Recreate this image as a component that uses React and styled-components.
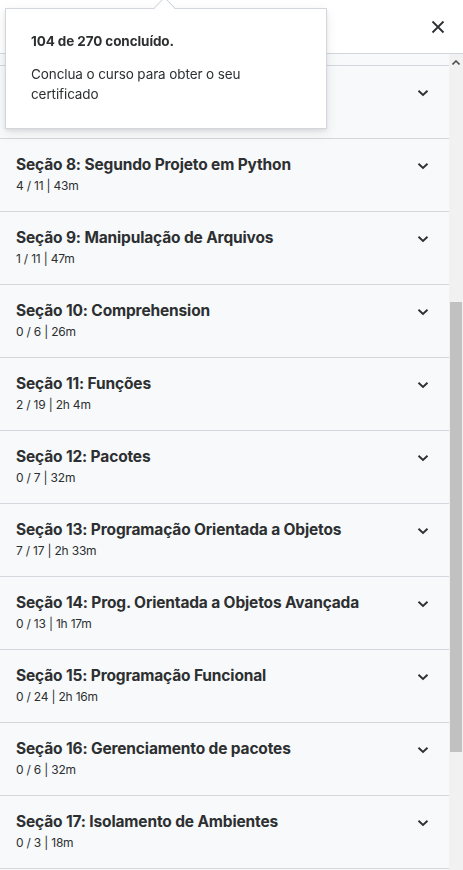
import React, { useLayoutEffect, useRef } from "react";
import styled, { createGlobalStyle } from "styled-components";

const Global = createGlobalStyle`
  html, body { margin: 0; padding: 0; background: #fff; }
  body { font-family: Inter, "Noto Sans", sans-serif; color: #2d2f31; }
  * { box-sizing: border-box; }
`;

const Page = styled.div`
  position: relative;
  width: 463px;
  height: 870px;
  display: flex;
  flex-direction: column;
  overflow: hidden;
`;

const Header = styled.header`
  height: 54px;
  flex: none;
  display: flex;
  align-items: center;
  justify-content: space-between;
  padding: 0 17px 0 16px;
  border-bottom: 1px solid #d1d7dc;
  background: #fff;
`;

const HeaderTitle = styled.h2`
  margin: 0;
  font-size: 16px;
  font-weight: 700;
`;

const CloseButton = styled.button`
  border: 0;
  background: none;
  padding: 0;
  width: 16px;
  height: 16px;
  display: flex;
  align-items: center;
  justify-content: center;
  color: #2d2f31;
`;

const Body = styled.div`
  flex: 1;
  display: flex;
  min-height: 0;
`;

const Viewport = styled.div`
  flex: 1;
  overflow-y: scroll;
  scrollbar-width: none;
  &::-webkit-scrollbar { display: none; }
  background: #f7f9fa;
`;

const Row = styled.div`
  height: 73px;
  display: flex;
  align-items: flex-start;
  justify-content: space-between;
  padding: 15px 20px 0 16px;
  border-bottom: 1px solid #d1d7dc;
  background: #f7f9fa;
`;

const RowText = styled.div`
  display: flex;
  flex-direction: column;
`;

const RowTitle = styled.div`
  font-size: 15.5px;
  font-weight: 700;
  line-height: 22px;
  letter-spacing: -0.15px;
  color: #2d2f31;
`;

const RowMeta = styled.div`
  font-size: 12px;
  line-height: 18px;
  color: #2d2f31;
  margin-top: 1px;
  letter-spacing: -0.2px;
`;

const Chevron = styled.span`
  display: flex;
  margin-top: 8px;
  color: #2d2f31;
`;

const Scrollbar = styled.div`
  width: 14px;
  flex: none;
  display: flex;
  flex-direction: column;
  background: #f1f1f1;
`;

const ScrollButton = styled.div`
  height: 17px;
  display: flex;
  align-items: center;
  justify-content: center;
  color: #505050;
`;

const Track = styled.div`
  flex: 1;
  display: flex;
  flex-direction: column;
`;

const Thumb = styled.div`
  margin-top: 231px;
  height: 450px;
  margin-left: 1px;
  margin-right: 1px;
  background: #c1c1c1;
`;

const Popover = styled.div`
  position: absolute;
  left: 5px;
  top: 8px;
  width: 322px;
  height: 121px;
  background: #fff;
  border: 1px solid #d1d7dc;
  box-shadow: 0 2px 4px rgba(0, 0, 0, 0.08), 0 4px 12px rgba(0, 0, 0, 0.08);
  padding: 22px 24px 0 25px;
  &::before {
    content: "";
    position: absolute;
    top: -9px;
    left: 151px;
    width: 14px;
    height: 14px;
    background: #fff;
    transform: rotate(45deg);
    border-left: 1px solid #d1d7dc;
    border-top: 1px solid #d1d7dc;
  }
`;

const PopTitle = styled.div`
  font-size: 13.5px;
  font-weight: 700;
  line-height: 20px;
  letter-spacing: -0.1px;
`;

const PopText = styled.div`
  margin-top: 14px;
  font-size: 13.5px;
  line-height: 19.5px;
  letter-spacing: -0.1px;
`;

const sections = [
  ["Seção 6: Primeiro Projeto em Python", "11 / 11 | 39m"],
  ["Seção 7: Tratamento de Erros", "5 / 5 | 22m"],
  ["Seção 8: Segundo Projeto em Python", "4 / 11 | 43m"],
  ["Seção 9: Manipulação de Arquivos", "1 / 11 | 47m"],
  ["Seção 10: Comprehension", "0 / 6 | 26m"],
  ["Seção 11: Funções", "2 / 19 | 2h 4m"],
  ["Seção 12: Pacotes", "0 / 7 | 32m"],
  ["Seção 13: Programação Orientada a Objetos", "7 / 17 | 2h 33m"],
  ["Seção 14: Prog. Orientada a Objetos Avançada", "0 / 13 | 1h 17m"],
  ["Seção 15: Programação Funcional", "0 / 24 | 2h 16m"],
  ["Seção 16: Gerenciamento de pacotes", "0 / 6 | 32m"],
  ["Seção 17: Isolamento de Ambientes", "0 / 3 | 18m"],
  ["Seção 18: Testes", "0 / 8 | 41m"],
];

const ChevronIcon = () => (
  <svg width="12" height="8" viewBox="0 0 12 8" fill="none">
    <path d="M1.5 1.8 L6 6 L10.5 1.8" stroke="currentColor" strokeWidth="1.9" />
  </svg>
);

export default function App() {
  const ref = useRef(null);
  useLayoutEffect(() => {
    if (ref.current) ref.current.scrollTop = 61;
  }, []);
  return (
    <Page>
      <Global />
      <Header>
        <HeaderTitle>Conteúdo do curso</HeaderTitle>
        <CloseButton aria-label="Fechar">
          <svg width="14" height="14" viewBox="0 0 14 14">
            <path d="M1.5 1.5 L12.5 12.5 M12.5 1.5 L1.5 12.5" stroke="currentColor" strokeWidth="1.8" />
          </svg>
        </CloseButton>
      </Header>
      <Body>
        <Viewport ref={ref}>
          {sections.map(([t, m]) => (
            <Row key={t}>
              <RowText>
                <RowTitle>{t}</RowTitle>
                <RowMeta>{m}</RowMeta>
              </RowText>
              <Chevron>
                <ChevronIcon />
              </Chevron>
            </Row>
          ))}
        </Viewport>
        <Scrollbar>
          <ScrollButton>
            <svg width="8" height="5" viewBox="0 0 8 5">
              <path d="M0.5 4.5 L4 1 L7.5 4.5" stroke="currentColor" strokeWidth="1.6" fill="none" />
            </svg>
          </ScrollButton>
          <Track>
            <Thumb />
          </Track>
        </Scrollbar>
      </Body>
      <Popover>
        <PopTitle>104 de 270 concluído.</PopTitle>
        <PopText>
          Conclua o curso para obter o seu
          <br />
          certificado
        </PopText>
      </Popover>
    </Page>
  );
}
